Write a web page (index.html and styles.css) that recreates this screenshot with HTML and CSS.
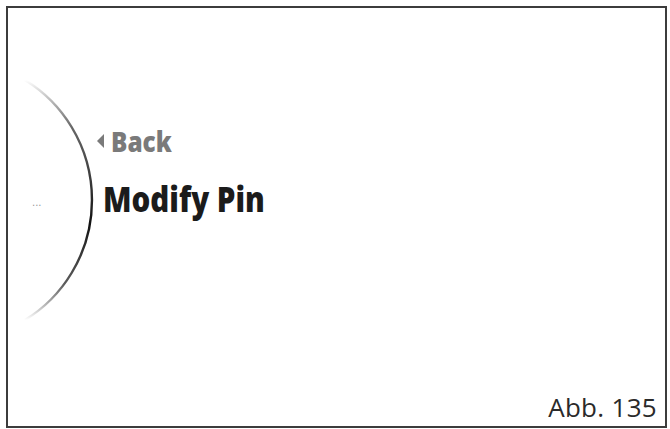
FILE: index.html
```html
<!DOCTYPE html>
<html lang="en">
<head>
  <meta charset="UTF-8">
  <meta name="viewport" content="width=device-width, initial-scale=1.0">
  <title>Modify Pin</title>
  <link rel="stylesheet" href="styles.css">
</head>
<body>
  <div class="frame">
    <div class="screen">
      <!-- Dial edge on the left side of the menu -->
      <svg class="dial" width="89" height="260" viewBox="0 0 89 260">
        <defs>
          <linearGradient id="dialFade" x1="0" y1="0" x2="0" y2="1">
            <stop offset="0" stop-color="#222" stop-opacity="0"/>
            <stop offset="0.2" stop-color="#333" stop-opacity="0.75"/>
            <stop offset="0.6" stop-color="#111" stop-opacity="1"/>
            <stop offset="0.85" stop-color="#333" stop-opacity="0.8"/>
            <stop offset="1" stop-color="#222" stop-opacity="0"/>
          </linearGradient>
        </defs>
        <path d="M17 10 A141 141 0 0 1 17 250" fill="none" stroke="url(#dialFade)" stroke-width="2.4"/>
        <text class="dots" x="24" y="136">...</text>
      </svg>
      <div class="menu">
        <div class="back">
          <span class="back-arrow"></span>
          <span class="narrow">Back</span>
        </div>
        <div class="title"><span class="narrow">Modify Pin</span></div>
      </div>
    </div>
    <div class="caption">Abb. 135</div>
  </div>
</body>
</html>
```

FILE: styles.css
```css
body {
  margin: 0;
  padding: 0;
  background: #fff;
}
.frame {
  box-sizing: border-box;
  width: 661px;
  height: 422px;
  margin: 6px 0 0 6px;
  border: 2px solid #3c3c3c;
  display: flex;
  flex-direction: column;
}
.screen {
  display: grid;
  grid-template-columns: 89px 1fr;
  margin-top: 62px;
}
.dial {
  display: block;
}
.dots {
  font-family: "DejaVu Sans", sans-serif;
  font-size: 10px;
  fill: #999;
}
.menu {
  display: flex;
  flex-direction: column;
  padding-top: 54px;
  font-family: "Open Sans", sans-serif;
  font-weight: 800;
}
/* the menu face is a condensed cut, squeeze the regular one */
.narrow {
  display: inline-block;
  transform: scaleX(0.84);
  transform-origin: left center;
}
.title .narrow {
  transform: scaleX(0.82);
}
.back {
  display: flex;
  align-items: center;
  gap: 7px;
  font-size: 29px;
  line-height: 34px;
  color: #7a7a7a;
}
.back-arrow {
  width: 0;
  height: 0;
  border-top: 7px solid transparent;
  border-bottom: 7px solid transparent;
  border-right: 7px solid #7a7a7a;
}
.title {
  margin: 21px 0 0 6px;
  font-size: 36px;
  line-height: 40px;
  color: #1b1b1b;
}
.caption {
  margin-top: auto;
  padding: 0 8px 1px 0;
  text-align: right;
  font-family: "Open Sans", sans-serif;
  font-size: 26px;
  letter-spacing: 0.3px;
  color: #2a2a2a;
}
```
